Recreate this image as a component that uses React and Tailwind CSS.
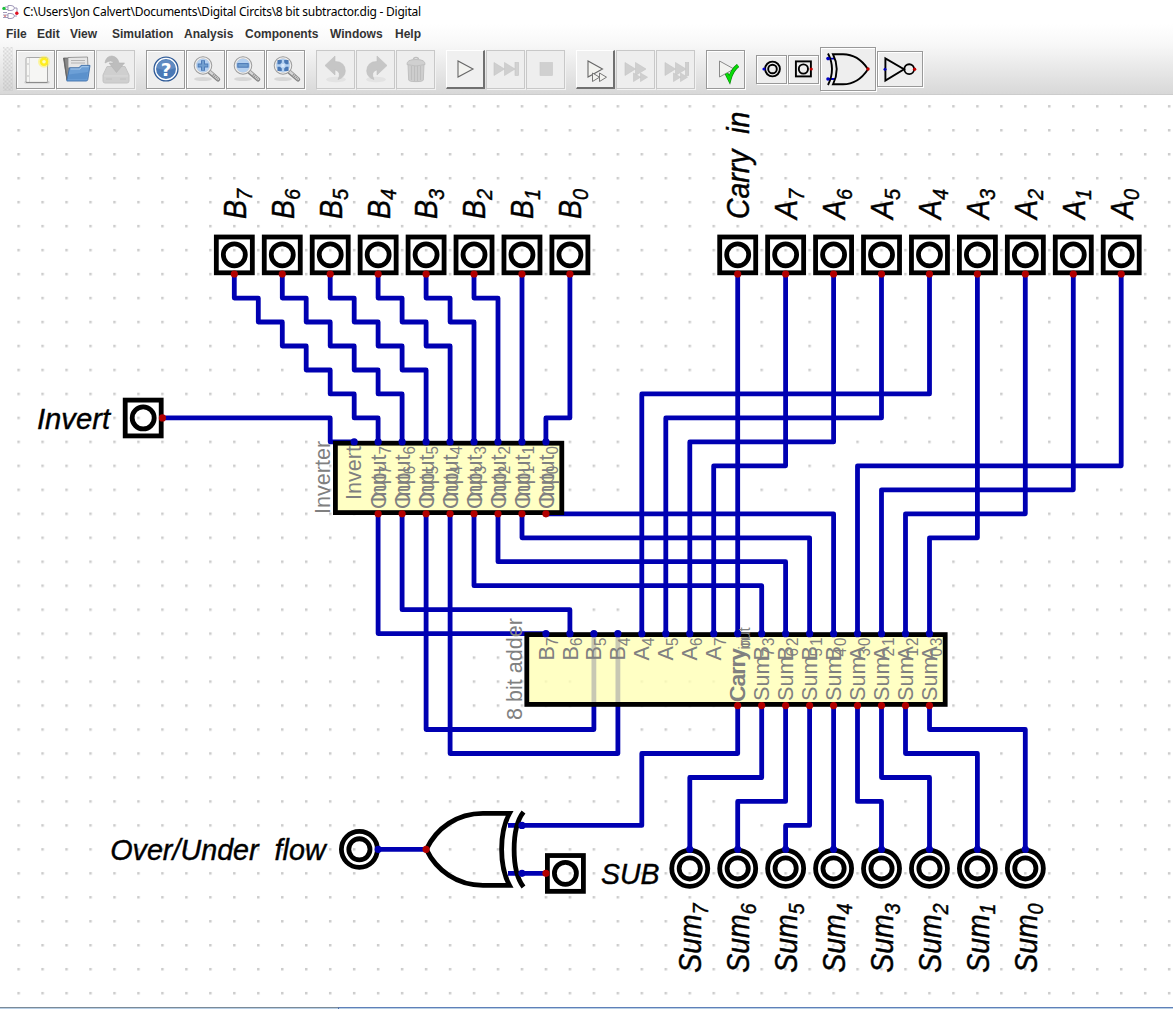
import React from "react";

const P = 23.97;
const X = (k) => 18.6 + P * k;
const Y = (j) => 106.3 + P * j;

const WIRE = "#0000b2";
const PIN_IN = "#0000b2";
const PIN_OUT = "#b20000";

// Wires as lists of grid nodes (column, row).
const wires = [
  [9, 7, 9, 8, 10, 8, 10, 9, 11, 9, 11, 10, 12, 10, 12, 11, 13, 11, 13, 12, 14, 12, 14, 13, 15, 13, 15, 14],
  [11, 7, 11, 8, 12, 8, 12, 9, 13, 9, 13, 10, 14, 10, 14, 11, 15, 11, 15, 12, 16, 12, 16, 14],
  [13, 7, 13, 8, 14, 8, 14, 9, 15, 9, 15, 10, 16, 10, 16, 11, 17, 11, 17, 14],
  [15, 7, 15, 8, 16, 8, 16, 9, 17, 9, 17, 10, 18, 10, 18, 14],
  [17, 7, 17, 8, 18, 8, 18, 9, 19, 9, 19, 14],
  [19, 7, 19, 8, 20, 8, 20, 14],
  [21, 7, 21, 14],
  [23, 7, 23, 13, 22, 13, 22, 14],
  [6, 13, 13, 13, 13, 14, 14, 14],
  [30, 7, 30, 22],
  [32, 7, 32, 15, 29, 15, 29, 22],
  [34, 7, 34, 14, 28, 14, 28, 22],
  [36, 7, 36, 13, 27, 13, 27, 22],
  [38, 7, 38, 12, 26, 12, 26, 22],
  [40, 7, 40, 18, 38, 18, 38, 22],
  [42, 7, 42, 17, 37, 17, 37, 22],
  [44, 7, 44, 16, 36, 16, 36, 22],
  [46, 7, 46, 15, 35, 15, 35, 22],
  [15, 17, 15, 22, 22, 22],
  [16, 17, 16, 21, 23, 21, 23, 22],
  [17, 17, 17, 26, 24, 26, 24, 22],
  [18, 17, 18, 27, 25, 27, 25, 22],
  [19, 17, 19, 20, 31, 20, 31, 22],
  [20, 17, 20, 19, 32, 19, 32, 22],
  [21, 17, 21, 18, 33, 18, 33, 22],
  [22, 17, 34, 17, 34, 22],
  [30, 25, 30, 27, 26, 27, 26, 30, 21, 30],
  [31, 25, 31, 28, 28, 28, 28, 31],
  [32, 25, 32, 29, 30, 29, 30, 31],
  [33, 25, 33, 30, 32, 30, 32, 31],
  [34, 25, 34, 31],
  [35, 25, 35, 29, 36, 29, 36, 31],
  [36, 25, 36, 28, 38, 28, 38, 31],
  [37, 25, 37, 27, 40, 27, 40, 31],
  [38, 25, 38, 26, 42, 26, 42, 31],
  [15, 31, 17, 31],
  [22, 32, 21, 32],
];

const toPoints = (w) => {
  const out = [];
  for (let i = 0; i < w.length; i += 2) out.push(X(w[i]).toFixed(1) + "," + Y(w[i + 1]).toFixed(1));
  return out.join(" ");
};

const topInputs = [
  [9, "B", "7"], [11, "B", "6"], [13, "B", "5"], [15, "B", "4"],
  [17, "B", "3"], [19, "B", "2"], [21, "B", "1"], [23, "B", "0"],
  [30, "Carry\u00a0\u00a0in", ""],
  [32, "A", "7"], [34, "A", "6"], [36, "A", "5"], [38, "A", "4"],
  [40, "A", "3"], [42, "A", "2"], [44, "A", "1"], [46, "A", "0"],
];

const adderTop = [
  ["B", "7"], ["B", "6"], ["B", "5"], ["B", "4"], ["A", "4"], ["A", "5"], ["A", "6"], ["A", "7"],
  ["Carry", "in"], ["B", "3"], ["B", "2"], ["B", "1"], ["B", "0"], ["A", "0"], ["A", "1"], ["A", "2"], ["A", "3"],
];
const adderBottom = [
  ["Carry", "out"], ["Sum", "7"], ["Sum", "6"], ["Sum", "5"], ["Sum", "4"], ["Sum", "3"], ["Sum", "2"], ["Sum", "1"], ["Sum", "0"],
];

function Dot({ k, j, out }) {
  return <circle cx={X(k)} cy={Y(j)} r="3.6" fill={out ? PIN_OUT : PIN_IN} />;
}

// Vertical text reading upwards, with an optional subscript.
function VText({ x, y, text, sub, size, anchor = "start", fill = "#000", italic, shift }) {
  return (
    <text
      transform={`translate(${x} ${y}) rotate(-90) scale(1 ${italic ? 1.08 : 1.05})`}
      fontSize={size}
      fill={fill}
      textAnchor={anchor}
      fontStyle={italic ? "italic" : "normal"}
      stroke={italic ? fill : "none"}
      strokeWidth={italic ? 0.4 : 0}
    >
      {text}
      {sub && (
        <tspan dy={shift} fontSize={size * 0.7}>
          {sub}
        </tspan>
      )}
    </text>
  );
}

function InputBox({ cx, cy }) {
  return (
    <g fill="none" stroke="#000" strokeWidth="4.8">
      <rect x={cx - 18} y={cy - 17.8} width="36" height="35.8" />
      <circle cx={cx} cy={cy} r="11" />
    </g>
  );
}

function OutputRing({ cx, cy }) {
  return (
    <g fill="none" stroke="#000" strokeWidth="4.8">
      <circle cx={cx} cy={cy} r="18" />
      <circle cx={cx} cy={cy} r="10.6" />
    </g>
  );
}

function Circuit() {
  return (
    <svg className="block shrink-0" width="1173" height="912" viewBox="0 95 1173 912" fontFamily='"Liberation Sans", Arial, sans-serif'>
      <defs>
        <pattern id="grid" x={X(0) - 1.25} y={Y(0) - 1.25} width={P} height={P} patternUnits="userSpaceOnUse">
          <rect width="2.5" height="2.5" fill="#cccccc" />
        </pattern>
      </defs>
      <rect x="0" y="95" width="1173" height="912" fill="url(#grid)" />
      <g fill="none" stroke={WIRE} strokeWidth="4.8" strokeLinecap="round" strokeLinejoin="round">
        {wires.map((w, i) => (
          <polyline key={i} points={toPoints(w)} />
        ))}
        <path d={`M508 ${Y(30)}H522M508 ${Y(32)}H522`} strokeLinecap="butt" />
      </g>

      <g fill="#ffffb4" fillOpacity="0.784" stroke="#000" strokeWidth="4.8">
        <rect x="335.4" y="443.2" width="226.4" height="69.4" />
        <rect x="526.8" y="634.6" width="418.4" height="69.8" />
      </g>

      <g fill="none" stroke="#000" strokeWidth="4.8">
        <path d="M509.5 813.4H483C457 813.4 436.5 828 426.3 849.4C436.5 870.5 457 885.4 483 885.4H509.5C499 866 499 832.5 509.5 813.4Z" />
        <path d="M523.5 812C511 828 511 871 523.5 887" />
      </g>

      {topInputs.map(([k, t, s]) => (
        <g key={k}>
          <InputBox cx={X(k)} cy={254.8} />
          <Dot k={k} j={7} out />
          <VText x={X(k) + 11.4} y={219} text={t} sub={s} size={28.4} shift="6.2" italic />
        </g>
      ))}

      <InputBox cx={143.2} cy={Y(13)} />
      <Dot k={6} j={13} out />
      <InputBox cx={565.4} cy={Y(32)} />
      <Dot k={22} j={32} out />
      <Dot k={21} j={32} />
      <Dot k={21} j={30} />
      <OutputRing cx={359.4} cy={Y(31)} />
      <Dot k={15} j={31} />
      <Dot k={17} j={31} out />
      <g fontSize="28.7" fontStyle="italic" fill="#000" stroke="#000" strokeWidth="0.4">
        <text x="37" y="428.6" textLength="73" lengthAdjust="spacingAndGlyphs">Invert</text>
        <text x="110.2" y="859.6" textLength="215.5" lengthAdjust="spacingAndGlyphs">{"Over/Under\u00a0\u00a0flow"}</text>
        <text x="601" y="883.5" textLength="58.5" lengthAdjust="spacingAndGlyphs">SUB</text>
      </g>

      {[7, 6, 5, 4, 3, 2, 1, 0].map((n, i) => (
        <g key={n}>
          <OutputRing cx={X(28 + 2 * i)} cy={868.4} />
          <Dot k={28 + 2 * i} j={31} />
          <VText x={X(28 + 2 * i) + 11.4} y={972.8} text="Sum" sub={String(n)} size={28.4} shift="6.2" italic />
        </g>
      ))}

      <Dot k={14} j={14} />
      {[7, 6, 5, 4, 3, 2, 1, 0].map((n, i) => (
        <g key={n}>
          <Dot k={15 + i} j={14} />
          <Dot k={15 + i} j={17} out />
          <VText x={X(15 + i) + 8.2} y={446} text="Input" sub={String(n)} size={21.6} shift="4" anchor="end" fill="#808080" />
          <VText x={X(15 + i) + 8.2} y={509} text="Out" sub={String(n)} size={21.6} shift="4" fill="#808080" />
        </g>
      ))}
      <VText x={X(14) + 7.2} y={446} text="Invert" size={21.6} anchor="end" fill="#808080" />
      <VText x={330} y={514} text="Inverter" size={21.6} fill="#808080" />
      <VText x={521.8} y={720} text="8 bit adder" size={21.6} fill="#808080" />

      {adderTop.map(([t, s], i) => (
        <g key={i}>
          <Dot k={22 + i} j={22} />
          <VText x={X(22 + i) + 7.6} y={637.7} text={t} sub={s} size={21.6} shift="4.6" anchor="end" fill="#808080" />
        </g>
      ))}
      {adderBottom.map(([t, s], i) => (
        <g key={i}>
          <Dot k={30 + i} j={25} out />
          <VText x={X(30 + i) + 7.6} y={701} text={t} sub={s} size={21.6} shift="4.6" fill="#808080" />
        </g>
      ))}
    </svg>
  );
}

/* ---------- toolbar icons ---------- */

function Icon({ children, w = 32, h = 32 }) {
  return (
    <svg className="block shrink-0" width={w} height={h} viewBox={`0 0 ${w} ${h}`}>
      {children}
    </svg>
  );
}

function NewIcon() {
  return (
    <Icon>
      <rect x="4.5" y="28" width="25" height="2.4" rx="1.2" fill="#b5b5b5" opacity=".6" />
      <rect x="6" y="4.5" width="21.5" height="25" rx="1.2" fill="#f6f6f4" stroke="#a8a8a8" strokeWidth="1" />
      <path d="M9.5 5V29" stroke="#dcdcdc" />
      <circle cx="8" cy="11" r=".7" fill="#aaa" />
      <circle cx="8" cy="23" r=".7" fill="#aaa" />
      <path d="M6 29.4H27.5" stroke="#888" />
      <circle cx="24" cy="8.8" r="6" fill="#fff35a" opacity=".55" />
      <circle cx="24" cy="8.8" r="4.2" fill="#ffee20" />
      <circle cx="24" cy="8.8" r="1.8" fill="#fffcc0" />
    </Icon>
  );
}

function OpenIcon() {
  return (
    <Icon>
      <path d="M3.5 5h7l1.5 2h14v8l-19 12Z" fill="#888" stroke="#666" strokeWidth=".8" />
      <path d="M8 4.5 27.5 4 28 15H8Z" fill="#e6e6e6" stroke="#888" strokeWidth=".8" />
      <path d="M11 7.5H25M11 10H25" stroke="#b4b4b4" />
      <path d="M4 5 7 27" stroke="#666" strokeWidth="1.2" />
      <path d="M9.5 14.8H19l2-2.4H30L27.8 26.6Q27.6 28 26 28H6.8Z" fill="#6c9fd6" stroke="#3f70ab" strokeWidth=".9" />
      <path d="M10.5 16H20l1.6-2.3H28.6" stroke="#a8c9ea" fill="none" />
      <path d="M8 26.3H26.6L28 19 8.8 21.5Z" fill="#447dbd" opacity=".4" />
    </Icon>
  );
}

function SaveIcon() {
  return (
    <Icon>
      <path d="M7 13.5 3 22v6Q3 30 5 30H27Q29 30 29 28V22L25 13.5Z" fill="#cfcfcf" stroke="#c4c4c4" />
      <path d="M4 23H28" stroke="#dadada" />
      <path d="M5 10Q6 3 12 3Q18 4 19 10H24.5L16.5 19.5 9 10H13.5Q12 6 5 10Z" fill="#bdbdbd" stroke="#b4b4b4" strokeWidth=".6" />
      <path d="M6 26H12M20 26H26" stroke="#c2c2c2" />
    </Icon>
  );
}

function HelpIcon() {
  return (
    <Icon>
      <circle cx="16" cy="16" r="12" fill="#3d6aa8" stroke="#2f5a96" strokeWidth="1.2" />
      <circle cx="16" cy="16" r="10.6" fill="#4a79b6" stroke="#fff" strokeWidth="1.3" />
      <path d="M6.5 15A9.6 9.6 0 0 1 25.5 15Q16 19 6.5 15Z" fill="#7da2d0" opacity=".45" />
      <text x="16" y="22.5" textAnchor="middle" fontSize="18.5" fontWeight="700" fill="#fff" fontFamily='"DejaVu Sans", sans-serif'>?</text>
    </Icon>
  );
}

function ZoomIcon({ kind }) {
  return (
    <Icon>
      <ellipse cx="13" cy="26" rx="9" ry="2" fill="#999" opacity=".28" />
      <path d="M19.5 19 28 26.3" stroke="#858585" strokeWidth="4.4" strokeLinecap="round" />
      <path d="M19.5 18.5 28 26" stroke="#d4d4d4" strokeWidth="2.4" strokeLinecap="round" />
      <path d="M23 21.5 28 26" stroke="#929292" strokeWidth="2.6" strokeDasharray="1 1" />
      <circle cx="13" cy="12.5" r="8.2" fill="#b4d0f0" stroke="#9c9c9c" strokeWidth="2.2" />
      <circle cx="13" cy="12.5" r="7.6" fill="none" stroke="#eee" strokeWidth="1.4" />
      {kind === "in" && <path d="M13 7.2V17.8M7.7 12.5H18.3" stroke="#4a78b5" strokeWidth="4" />}
      {kind === "in" && <path d="M13 8V17M8.5 12.5H17.5" stroke="#729fcf" strokeWidth="2.2" />}
      {kind === "out" && <rect x="7.8" y="10.6" width="10.4" height="3.6" fill="#729fcf" stroke="#4a78b5" />}
      {kind === "fit" && (
        <g fill="#4a78b5">
          <path d="M7.5 7H11.8V9.5L10 11.3H7.5ZM18.5 7H14.2V9.5L16 11.3H18.5ZM7.5 18H11.8V15.5L10 13.7H7.5ZM18.5 18H14.2V15.5L16 13.7H18.5Z" />
          <rect x="11.4" y="11" width="3.2" height="3.2" fill="#d8e8fa" />
        </g>
      )}
    </Icon>
  );
}

function UndoIcon({ flip }) {
  return (
    <Icon>
      <ellipse cx="16" cy="26.5" rx="10" ry="2.8" fill="#e3e3e3" />
      <g transform={flip ? "translate(32 0) scale(-1 1)" : undefined}>
        <path d="M5 12.5 15 3V8.5Q25 8.5 25.3 18Q25 24.5 18 26.5Q22 19 15 16.8V22Z" fill="#c6c6c6" stroke="#bfbfbf" strokeWidth=".6" />
      </g>
    </Icon>
  );
}

function TrashIcon() {
  return (
    <Icon>
      <path d="M8 11H24L23.3 27Q23 28.6 16 28.6Q9 28.6 8.7 27Z" fill="#cecece" stroke="#c0c0c0" />
      <path d="M11.5 13V27M14.5 13V28M17.5 13V28M20.5 13V27" stroke="#bebebe" strokeWidth="1.1" />
      <path d="M13.5 6.5Q13.5 4.5 16 4.5Q18.5 4.5 18.5 6.5" fill="none" stroke="#bebebe" strokeWidth="1.4" />
      <path d="M7 11.5Q6.5 6.5 16 6.5Q25.5 6.5 25 11.5Q16 14.5 7 11.5Z" fill="#d0d0d0" stroke="#c0c0c0" />
    </Icon>
  );
}

function PlayIcon() {
  return (
    <Icon>
      <path d="M9 8V24L24 16Z" fill="#f3f3f0" stroke="#686868" strokeWidth="1.1" />
    </Icon>
  );
}

function SkipIcon() {
  return (
    <Icon>
      <path d="M4 9.5V22.5L14.5 16ZM14.5 9.5V22.5L25 16Z" fill="#cfcfcf" stroke="#c4c4c4" strokeWidth=".6" />
      <rect x="25" y="9.5" width="3.6" height="13" fill="#d2d2d2" stroke="#c4c4c4" strokeWidth=".6" />
    </Icon>
  );
}

function StopIcon() {
  return (
    <Icon>
      <rect x="10" y="9.5" width="12.5" height="13" fill="#d0d0d0" stroke="#c8c8c8" strokeWidth=".6" />
    </Icon>
  );
}

function MicroPlayIcon() {
  return (
    <Icon>
      <path d="M9 8V24L23.5 16Z" fill="#f3f3f0" stroke="#686868" strokeWidth="1.1" />
      <path d="M13.5 20V28.5L20.5 24.2ZM20.5 20V28.5L27.5 24.2Z" fill="#f3f3f0" stroke="#777" strokeWidth="1" />
    </Icon>
  );
}

function MicroFastIcon({ bar }) {
  return (
    <Icon>
      <g fill="#cfcfcf" stroke="#c4c4c4" strokeWidth=".6">
        <path d="M5 9.5V22.5L15.5 16ZM15.5 9.5V22.5L26 16Z" />
        {bar && <rect x="25.5" y="9.5" width="3.2" height="13" />}
        <path d="M13.5 20V28.5L20.5 24.2ZM20.5 20V28.5L27.5 24.2Z" />
      </g>
    </Icon>
  );
}

function CheckIcon() {
  return (
    <Icon>
      <path d="M9.5 8V24L24 16Z" fill="#f3f3f0" stroke="#8a8a8a" strokeWidth="1" />
      <path d="M16.5 20.5 19.5 26.5Q22 17 28 12.5" fill="none" stroke="#087d08" strokeWidth="3.8" />
      <path d="M16.5 20.5 19.5 26.5Q22 17 28 12.5" fill="none" stroke="#08dd08" strokeWidth="2.6" />
    </Icon>
  );
}

function OutIcon() {
  return (
    <Icon w={26} h={24}>
      <circle cx="13.5" cy="12" r="7.4" fill="none" stroke="#000" strokeWidth="1.9" />
      <circle cx="13.5" cy="12" r="4.3" fill="none" stroke="#000" strokeWidth="1.9" />
      <circle cx="5" cy="12" r="1.6" fill="#0000d0" />
    </Icon>
  );
}

function InIcon() {
  return (
    <Icon w={26} h={24}>
      <rect x="4.9" y="4.4" width="15" height="15" fill="none" stroke="#000" strokeWidth="1.9" />
      <circle cx="12.4" cy="12" r="4.6" fill="none" stroke="#000" strokeWidth="1.9" />
      <circle cx="20.2" cy="12" r="1.6" fill="#c00000" />
    </Icon>
  );
}

function XorIcon() {
  return (
    <Icon w={54} h={42}>
      <path d="M7 10.6H14M7 31H14" stroke="#0000c0" strokeWidth="1.8" />
      <path d="M12 6.3H22Q37 6.3 47 21.2Q37 36.3 22 36.3H12Q19.5 21.2 12 6.3Z" fill="none" stroke="#000" strokeWidth="1.9" />
      <path d="M7 5.5Q15 21 7 37" fill="none" stroke="#000" strokeWidth="1.9" />
      <circle cx="7" cy="10.6" r="1.8" fill="#0000c0" />
      <circle cx="7" cy="31" r="1.8" fill="#0000c0" />
      <circle cx="47" cy="21" r="1.7" fill="#c00000" />
    </Icon>
  );
}

function NotIcon() {
  return (
    <Icon w={44} h={34}>
      <path d="M7.4 6.5V28.5L26 17.3Z" fill="none" stroke="#000" strokeWidth="1.9" />
      <circle cx="31.2" cy="17.2" r="4.9" fill="none" stroke="#000" strokeWidth="1.9" />
      <circle cx="7" cy="17.2" r="1.5" fill="#0000c0" />
      <circle cx="36.6" cy="17.2" r="1.7" fill="#c00000" />
    </Icon>
  );
}

const base = "flex shrink-0 items-center justify-center bg-[#eeeeee]";
const normal = "border border-[#999999] shadow-[1px_1px_0_#ffffff,inset_1px_1px_0_#ffffff]";
const disabled = "border border-[#c8c8c8] shadow-[1px_1px_0_#f2f2f2]";
const raised = "border-t border-l border-r-2 border-b-2 border-t-white border-l-white border-r-[#707070] border-b-[#707070] bg-[#f0f0f0]";

function Btn({ children, kind = normal, size = "h-[39px] w-[39px]" }) {
  return (
    <button type="button" className={`${base} ${kind} ${size}`}>
      {children}
    </button>
  );
}

function Group({ children }) {
  return <div className="flex gap-px">{children}</div>;
}

function AppIcon() {
  return (
    <svg className="block shrink-0" width="17" height="16" viewBox="0 0 17 16">
      <g fill="none" stroke="#8a80a8" strokeWidth=".8">
        <path d="M6 1.5H9Q12 1.5 12.5 4Q12 6.5 9 6.5H6ZM6 9.5H9Q12 9.5 12.5 12Q12 14.5 9 14.5H6Z" />
        <path d="M3 3H6M3 5.5H6M1 11H6M1 13.5H6M12.5 4H15V8M12.5 12H15M1 8.5H5" />
      </g>
      <circle cx="2" cy="4.4" r="1.7" fill="#18c038" />
      <circle cx="3" cy="12" r="1.1" fill="#d88080" />
      <circle cx="14.8" cy="9.3" r="1.7" fill="#e01020" />
    </svg>
  );
}

const menus = [
  ["File", "w-[31px]"],
  ["Edit", "w-[33px]"],
  ["View", "w-[42px]"],
  ["Simulation", "w-[72px]"],
  ["Analysis", "w-[61px]"],
  ["Components", "w-[85px]"],
  ["Windows", "w-[65px]"],
  ["Help", "w-[40px]"],
];

export default function App() {
  return (
    <div className="flex h-[1009px] w-[1173px] flex-col overflow-hidden bg-white">
      <header className="flex h-6 shrink-0 items-center pl-[2px]">
        <AppIcon />
        <span className="ml-1 whitespace-nowrap font-['Noto_Sans','Open_Sans',sans-serif] text-[12px] leading-6 tracking-[-0.245px] text-black">
          C:\Users\Jon Calvert\Documents\Digital Circits\8 bit subtractor.dig - Digital
        </span>
      </header>

      <nav className="flex h-5 shrink-0 items-center bg-gradient-to-b from-white to-[#f8f8f8] pl-[6px] font-['Liberation_Sans',Arial,sans-serif] text-[12px] font-bold text-[#333333]">
        {menus.map(([m, w]) => (
          <span key={m} className={`shrink-0 whitespace-nowrap ${w}`}>
            {m}
          </span>
        ))}
      </nav>

      <div className="flex h-[51px] shrink-0 items-center gap-[11px] border-b border-[#cccccc] bg-gradient-to-b from-[#f8f8f8] to-[#d8d8d8] pl-[3px]">
        <div className="-mr-[8px] h-11 w-[10px] shrink-0 bg-[radial-gradient(circle,#a0a0a0_0.5px,transparent_0.8px),radial-gradient(circle,#a0a0a0_0.5px,transparent_0.8px)] bg-[length:4px_4px] bg-[position:0.5px_0.5px,2.5px_2.5px]" />
        <Group>
          <Btn><NewIcon /></Btn>
          <Btn><OpenIcon /></Btn>
          <Btn kind={disabled}><SaveIcon /></Btn>
        </Group>
        <Group>
          <Btn><HelpIcon /></Btn>
          <Btn><ZoomIcon kind="in" /></Btn>
          <Btn><ZoomIcon kind="out" /></Btn>
          <Btn><ZoomIcon kind="fit" /></Btn>
        </Group>
        <Group>
          <Btn kind={disabled}><UndoIcon /></Btn>
          <Btn kind={disabled}><UndoIcon flip /></Btn>
          <Btn kind={disabled}><TrashIcon /></Btn>
        </Group>
        <Group>
          <Btn kind={raised}><PlayIcon /></Btn>
          <Btn kind={disabled}><SkipIcon /></Btn>
          <Btn kind={disabled}><StopIcon /></Btn>
        </Group>
        <Group>
          <Btn kind={raised}><MicroPlayIcon /></Btn>
          <Btn kind={disabled}><MicroFastIcon /></Btn>
          <Btn kind={disabled}><MicroFastIcon bar /></Btn>
        </Group>
        <Btn><CheckIcon /></Btn>
        <div className="flex items-center gap-px">
          <Btn size="h-[29px] w-[31px]"><OutIcon /></Btn>
          <Btn size="h-[29px] w-[31px]"><InIcon /></Btn>
          <Btn size="h-[44px] w-[56px]"><XorIcon /></Btn>
          <Btn size="h-[36px] w-[46px]"><NotIcon /></Btn>
        </div>
      </div>

      <Circuit />

      <footer className="flex h-[2px] shrink-0">
        <div className="h-[2px] w-[339px] border-t border-r border-[#7a8a99] border-r-[#4f6fb0] bg-[#b8cfe5]" />
        <div className="h-[2px] flex-1 border-t border-[#5f80b8] bg-[#b8cfe5]" />
      </footer>
    </div>
  );
}
